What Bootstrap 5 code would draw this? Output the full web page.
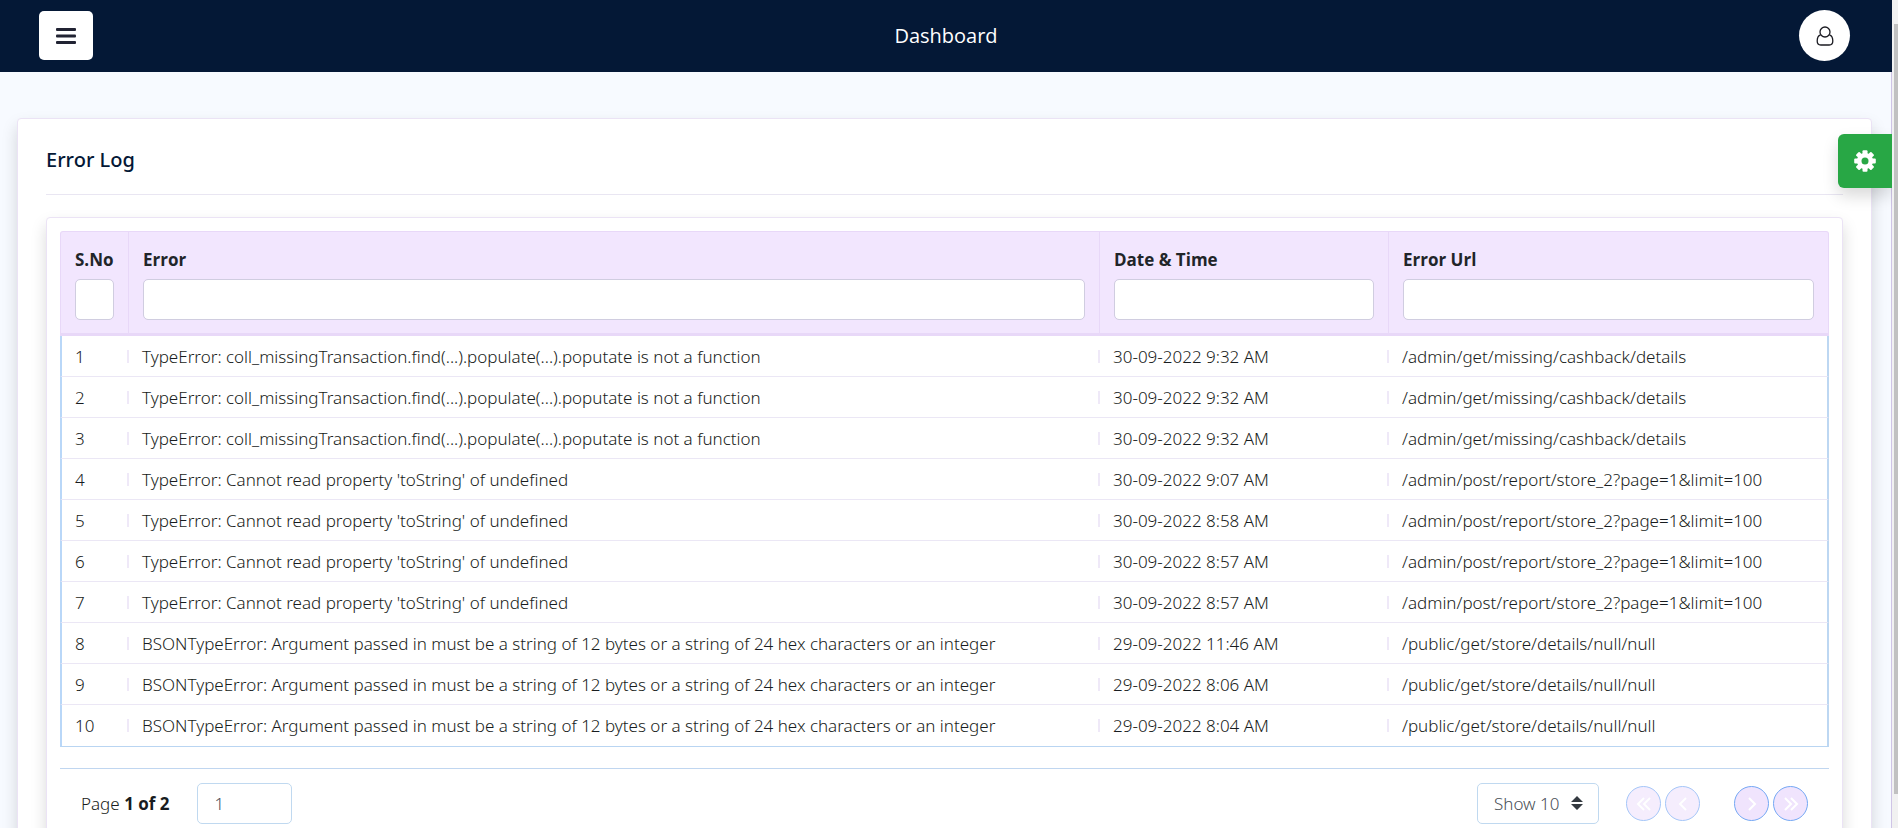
<!DOCTYPE html>
<html lang="en">
<head>
<meta charset="utf-8">
<meta name="viewport" content="width=device-width, initial-scale=1">
<title>Dashboard</title>
<link href="https://cdn.jsdelivr.net/npm/bootstrap@5.3.0/dist/css/bootstrap.min.css" rel="stylesheet">
<style>
  body { font-family: "Noto Sans", "Open Sans", sans-serif; font-size: 17px; font-weight: 300; line-height: 24px; color: #181c20; background: #f7faff; }
  .page-shell { margin-right: 6px; border-right: 1px solid #cfc4e6; }
  .scroll-rail { width: 6px; background: #f1f1f1; z-index: 1040; }
  .scroll-thumb { width: 4px; height: 93%; margin-top: 24px; background: #c1c1c1; }
  .topbar { height: 72px; background: #041836; margin-right: -1px; padding: 0 42px 1px 39px; }
  .topbar h1 { font-family: "Open Sans", sans-serif; font-size: 20px; line-height: 26px; font-weight: 400; color: #fff; }
  .menu-btn { width: 54px; height: 49px; border-radius: 5px; }
  .user-btn { width: 51px; height: 51px; }
  .panel { border: 1px solid #ebe3f5; border-radius: 4px; background: #fff; box-shadow: 0 8px 16px rgba(0, 0, 0, .15); }
  .log-panel { margin: 46px 19px 46px 17px; padding: 27px 28px 46px; }
  .log-panel h2 { font-size: 20px; line-height: 27px; font-weight: 500; color: #041836; }
  .rule-line { margin: 21px 0 22px; border-top: 1px solid #e9e6f2; }
  .grid-panel { padding: 13px; }
  .log-table { table-layout: fixed; border-collapse: separate; border-spacing: 0; }
  .log-table th { font-family: "Open Sans", sans-serif; background: #f2e6fe; border: solid #e8d8f8; border-width: 1px 1px 3px 0; padding: 15px 14px 13px; font-weight: 700; color: #212529; }
  .log-table th:first-child { border-left-width: 1px; border-top-left-radius: 3px; padding-left: 14px; }
  .log-table th:last-child { border-top-right-radius: 3px; }
  .log-table th label { line-height: 26px; white-space: nowrap; }
  .log-table .form-control { height: 41px; margin-top: 6px; border: 1px solid #d0cde0; border-radius: 5px; }
  .log-table td { height: 41px; padding: 1px 13px 0; line-height: 24px; border-bottom: 1px solid #ebe7f5; background: linear-gradient(#efe9f8, #efe9f8) right center / 2px 13px no-repeat; }
  .log-table td:first-child { border-left: 2px solid #b9d7f8; }
  .log-table td:last-child { border-right: 2px solid #bdd7f2; background: none; }
  .log-table tbody tr:last-child td { height: 42px; border-bottom-color: #b9d5f2; }
  .c-no { width: 69px; } .c-date { width: 289px; } .c-url { width: 440px; }
  .pager { margin-top: 21px; padding: 14px 21px 0; border-top: 1px solid #c0d6f0; }
  .pager strong { font-family: "Open Sans", sans-serif; font-weight: 700; }
  .page-field, .page-size { height: 41px; border: 1px solid #c0d9f0; border-radius: 5px; color: #495057; font-weight: 300; font-size: 17px; background: #fff; }
  .page-field { width: 95px; margin-left: 27px; padding: 0 17px; }
  .size-box { width: 122px; margin-right: 27px; }
  .page-size { appearance: none; width: 100%; padding: 0 16px; }
  .size-box svg { right: 16px; top: 13px; pointer-events: none; }
  .next-pages { margin-left: 34px; }
  .round-btn { width: 35px; height: 35px; border: 1px solid #74a8f4; background: #f0e4fd; }
  .round-btn:disabled { opacity: .65; }
  .gear-btn { right: 6px; top: 134px; width: 54px; height: 54px; background: #28a745; border-radius: 6px 0 0 6px; box-shadow: 0 8px 16px rgba(0, 0, 0, .15); z-index: 1030; }
</style>
</head>
<body>
<div class="page-shell">
  <header class="topbar d-flex align-items-center justify-content-between">
    <button class="menu-btn btn btn-light bg-white border-0 p-0 d-flex align-items-center justify-content-center" aria-label="Menu">
      <svg width="20" height="16" viewBox="0 0 20 16" fill="#212333"><rect width="20" height="3" rx="1"/><rect y="6.500" width="20" height="3" rx="1"/><rect y="13" width="20" height="3" rx="1"/></svg>
    </button>
    <h1 class="mb-0">Dashboard</h1>
    <button class="user-btn btn btn-light bg-white border-0 rounded-circle p-0 d-flex align-items-center justify-content-center" aria-label="Account">
      <svg width="18" height="20" viewBox="0 0 18 20" fill="none" stroke="#1b1b22" stroke-width="1.300"><circle cx="9" cy="6" r="5"/><path d="M4.600 8.800C2 9.600 1.200 12.400 1.200 15c0 2.400 1.400 4 3.600 4h8.400c2.200 0 3.600-1.600 3.600-4 0-2.600-.8-5.400-3.400-6.200"/></svg>
    </button>
  </header>

  <main class="log-panel panel">
    <h2 class="m-0">Error Log</h2>
    <div class="rule-line"></div>
    <section class="grid-panel panel">
      <table class="log-table w-100">
        <colgroup><col class="c-no"><col><col class="c-date"><col class="c-url"></colgroup>
        <thead><tr>
          <th><label class="d-block" for="f-no">S.No</label><input class="form-control" id="f-no"></th>
          <th><label class="d-block" for="f-err">Error</label><input class="form-control" id="f-err"></th>
          <th><label class="d-block" for="f-date">Date &amp; Time</label><input class="form-control" id="f-date"></th>
          <th><label class="d-block" for="f-url">Error Url</label><input class="form-control" id="f-url"></th>
        </tr></thead>
        <tbody>
          <tr><td>1</td><td>TypeError: coll_missingTransaction.find(...).populate(...).poputate is not a function</td><td>30-09-2022 9:32 AM</td><td>/admin/get/missing/cashback/details</td></tr>
          <tr><td>2</td><td>TypeError: coll_missingTransaction.find(...).populate(...).poputate is not a function</td><td>30-09-2022 9:32 AM</td><td>/admin/get/missing/cashback/details</td></tr>
          <tr><td>3</td><td>TypeError: coll_missingTransaction.find(...).populate(...).poputate is not a function</td><td>30-09-2022 9:32 AM</td><td>/admin/get/missing/cashback/details</td></tr>
          <tr><td>4</td><td>TypeError: Cannot read property 'toString' of undefined</td><td>30-09-2022 9:07 AM</td><td>/admin/post/report/store_2?page=1&amp;limit=100</td></tr>
          <tr><td>5</td><td>TypeError: Cannot read property 'toString' of undefined</td><td>30-09-2022 8:58 AM</td><td>/admin/post/report/store_2?page=1&amp;limit=100</td></tr>
          <tr><td>6</td><td>TypeError: Cannot read property 'toString' of undefined</td><td>30-09-2022 8:57 AM</td><td>/admin/post/report/store_2?page=1&amp;limit=100</td></tr>
          <tr><td>7</td><td>TypeError: Cannot read property 'toString' of undefined</td><td>30-09-2022 8:57 AM</td><td>/admin/post/report/store_2?page=1&amp;limit=100</td></tr>
          <tr><td>8</td><td>BSONTypeError: Argument passed in must be a string of 12 bytes or a string of 24 hex characters or an integer</td><td>29-09-2022 11:46 AM</td><td>/public/get/store/details/null/null</td></tr>
          <tr><td>9</td><td>BSONTypeError: Argument passed in must be a string of 12 bytes or a string of 24 hex characters or an integer</td><td>29-09-2022 8:06 AM</td><td>/public/get/store/details/null/null</td></tr>
          <tr><td>10</td><td>BSONTypeError: Argument passed in must be a string of 12 bytes or a string of 24 hex characters or an integer</td><td>29-09-2022 8:04 AM</td><td>/public/get/store/details/null/null</td></tr>
        </tbody>
      </table>
      <div class="pager d-flex align-items-center">
        <label for="page-no">Page <strong>1 of 2</strong></label>
        <input class="page-field" id="page-no" value="1">
        <div class="size-box position-relative ms-auto">
          <select class="page-size" aria-label="Rows per page"><option>Show 10</option><option>Show 25</option></select>
          <svg class="position-absolute" width="12" height="14" viewBox="0 0 12 14" fill="#343a40"><path d="M6 0l6 6H0zM6 14L0 8h12z"/></svg>
        </div>
        <div class="d-flex gap-1">
          <button class="round-btn rounded-circle p-0 d-flex align-items-center justify-content-center" disabled aria-label="First page"><svg width="16" height="16" viewBox="0 0 16 16" fill="none" stroke="#fff" stroke-width="2"><path d="M8 2L2 8l6 6M14 2L8 8l6 6"/></svg></button>
          <button class="round-btn rounded-circle p-0 d-flex align-items-center justify-content-center" disabled aria-label="Previous page"><svg width="16" height="16" viewBox="0 0 16 16" fill="none" stroke="#fff" stroke-width="2"><path d="M11 2L5 8l6 6"/></svg></button>
        </div>
        <div class="next-pages d-flex gap-1">
          <button class="round-btn rounded-circle p-0 d-flex align-items-center justify-content-center" aria-label="Next page"><svg width="16" height="16" viewBox="0 0 16 16" fill="none" stroke="#fff" stroke-width="2"><path d="M5 2l6 6-6 6"/></svg></button>
          <button class="round-btn rounded-circle p-0 d-flex align-items-center justify-content-center" aria-label="Last page"><svg width="16" height="16" viewBox="0 0 16 16" fill="none" stroke="#fff" stroke-width="2"><path d="M2 2l6 6-6 6M8 2l6 6-6 6"/></svg></button>
        </div>
      </div>
    </section>
  </main>
</div>

<button class="gear-btn position-fixed border-0 p-0 d-flex align-items-center justify-content-center" aria-label="Settings">
  <svg width="22" height="22" viewBox="-11 -11 22 22"><g fill="#fff"><circle r="8"/><g id="teeth"><rect x="-2.500" y="-10.800" width="5" height="21.600" rx="1"/><rect x="-10.800" y="-2.500" width="21.600" height="5" rx="1"/></g><use href="#teeth" transform="rotate(45)"/></g><circle r="3.500" fill="#28a745"/></svg>
</button>
<div class="scroll-rail position-fixed top-0 end-0 h-100 d-flex justify-content-end" aria-hidden="true"><div class="scroll-thumb"></div></div>
<script src="https://cdn.jsdelivr.net/npm/bootstrap@5.3.0/dist/js/bootstrap.bundle.min.js"></script>
</body>
</html>
